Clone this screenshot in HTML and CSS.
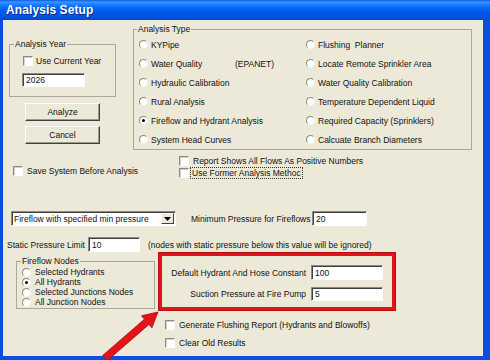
FILE: index.html
```html
<!DOCTYPE html>
<html>
<head>
<meta charset="utf-8">
<title>Analysis Setup</title>
<link rel="stylesheet" href="styles.css">
</head>
<body>
<div class="window">
  <div class="titlebar"><span class="title">Analysis Setup</span></div>
  <div class="client">
    <div class="top">
      <div class="leftcol">
        <fieldset class="group year">
          <legend>Analysis Year</legend>
          <div class="year-inner">
            <div class="check-row"><span class="cb"></span><span>Use Current Year</span></div>
            <div class="field year-field">2026</div>
          </div>
        </fieldset>
        <div class="btn analyze">Analyze</div>
        <div class="btn cancel">Cancel</div>
      </div>
      <fieldset class="group type">
        <legend>Analysis Type</legend>
        <div class="type-grid">
          <div class="opt"><span class="rb"></span>KYPipe</div>
          <div class="opt"><span class="rb"></span>Flushing&nbsp; Planner</div>
          <div class="opt"><span class="rb"></span><span class="wq">Water Quality</span>(EPANET)</div>
          <div class="opt"><span class="rb"></span>Locate Remote Sprinkler Area</div>
          <div class="opt"><span class="rb"></span>Hydraulic Calibration</div>
          <div class="opt"><span class="rb"></span>Water Quality Calibration</div>
          <div class="opt"><span class="rb"></span>Rural Analysis</div>
          <div class="opt"><span class="rb"></span>Temperature Dependent Liquid</div>
          <div class="opt"><span class="rb on"></span>Fireflow and Hydrant Analysis</div>
          <div class="opt"><span class="rb"></span>Required Capacity (Sprinklers)</div>
          <div class="opt"><span class="rb"></span>System Head Curves</div>
          <div class="opt"><span class="rb"></span>Calcuate Branch Diameters</div>
        </div>
      </fieldset>
    </div>

    <div class="rowb">
      <div class="save check-row"><span class="cb"></span><span>Save System Before Analysis</span></div>
      <div class="opts-b">
        <div class="check-row"><span class="cb"></span><span>Report Shows All Flows As Positive Numbers</span></div>
        <div class="check-row"><span class="cb"></span><span class="focus">Use Former Analysis Methoc</span></div>
      </div>
    </div>

    <div class="rowc">
      <div class="combo">
        <span class="combo-text">Fireflow with specified min pressure</span>
        <span class="combo-btn"><svg width="7" height="4" viewBox="0 0 7 4"><path d="M0 0H7L3.5 4Z" fill="#000"/></svg></span>
      </div>
      <span class="minlabel">Minimum Pressure for Fireflows</span>
      <div class="field minfield">20</div>
    </div>

    <div class="rowd">
      <span class="staticlabel">Static Pressure Limit</span>
      <div class="field staticfield">10</div>
      <span>(nodes with static pressure below this value will be ignored)</span>
    </div>

    <div class="rowe">
      <fieldset class="group nodes">
        <legend>Fireflow Nodes</legend>
        <div class="nodes-list">
          <div class="opt"><span class="rb sm"></span>Selected Hydrants</div>
          <div class="opt"><span class="rb sm on"></span>All Hydrants</div>
          <div class="opt"><span class="rb sm"></span>Selected Junctions Nodes</div>
          <div class="opt"><span class="rb sm"></span>All Junction Nodes</div>
        </div>
      </fieldset>
      <div class="redbox">
        <span class="rl">Default Hydrant And Hose Constant</span>
        <div class="field rf1">100</div>
        <span class="rl">Suction Pressure at Fire Pump</span>
        <div class="field rf2">5</div>
      </div>
    </div>

    <div class="rowf">
      <div class="check-row"><span class="cb"></span><span>Generate Flushing Report (Hydrants and Blowoffs)</span></div>
      <div class="check-row"><span class="cb"></span><span>Clear Old Results</span></div>
    </div>
  </div>

  <svg class="arrow" width="490" height="360" viewBox="0 0 490 360">
    <polygon points="102.7,355.4 144.4,319.2 141.5,315.8 158,312 151.9,327.8 149,324.4 107.3,360.6" fill="#e5121a" stroke="#a50a0f" stroke-width="0.8" stroke-linejoin="round"/>
  </svg>
</div>
</body>
</html>
```

FILE: styles.css
```css
* { box-sizing: border-box; }
html, body { margin: 0; padding: 0; }
body {
  width: 490px;
  height: 360px;
  overflow: hidden;
  font-family: "Liberation Sans", Arial, sans-serif;
  font-size: 8.5px;
  color: #111;
  background: #ECE9D8;
}
.window {
  position: relative;
  width: 490px;
  height: 360px;
  display: flex;
  flex-direction: column;
}
.titlebar {
  flex: none;
  height: 20px;
  display: flex;
  align-items: center;
  padding-left: 6px;
  background: linear-gradient(#0a5be8 0%, #3c95ff 10%, #1a80ff 22%, #0468f6 40%, #0058ea 60%, #0053e0 85%, #0049cf 100%);
  color: #fff;
}
.title {
  font-family: "Liberation Sans Narrow", "Liberation Sans", Arial, sans-serif;
  font-weight: bold;
  font-size: 12px;
  letter-spacing: 0.1px;
  text-shadow: 1px 1px 0 #0a2a8a;
}
.client {
  flex: 1;
  background: #ECE9D8;
  border-left: 3px solid #0b4fe0;
  border-right: 7px solid #0b4fe0;
  border-bottom: 4px solid #0b4fe0;
  padding-top: 4px;
  display: flex;
  flex-direction: column;
}

/* group boxes */
.group {
  margin: 0;
  padding: 0;
  min-width: 0;
  border: 1px solid #aca899;
}
.group legend {
  padding: 0 1px;
  height: 11px;
  line-height: 11px;
  margin-left: 3px;
}

/* common controls */
.check-row { display: flex; align-items: center; height: 12px; white-space: nowrap; }
.cb {
  flex: none;
  width: 10px;
  height: 10px;
  background: #fff;
  border: 1px solid;
  border-color: #8a8a80 #fdfdfb #fdfdfb #8a8a80;
  box-shadow: inset 1px 1px 0 #d4d0c8;
  margin-right: 4px;
}
.opt { display: flex; align-items: center; white-space: nowrap; }
.rb {
  flex: none;
  position: relative;
  width: 9px;
  height: 9px;
  border-radius: 50%;
  background: #fff;
  border: 1px solid;
  border-color: #8a8a80 #f4f3ee #f4f3ee #8a8a80;
  margin-right: 3px;
}
.rb.on::after {
  content: "";
  position: absolute;
  left: 2px;
  top: 2px;
  width: 3px;
  height: 3px;
  border-radius: 50%;
  background: #000;
}
.field {
  flex: none;
  background: #fff;
  border: 1px solid;
  border-color: #8a8a80 #fff #fff #8a8a80;
  box-shadow: inset 1px 1px 0 #404040;
  padding-left: 3px;
  display: flex;
  align-items: center;
  white-space: nowrap;
}
.btn {
  width: 75px;
  height: 18px;
  display: flex;
  align-items: center;
  justify-content: center;
  border: 1px solid;
  border-color: #fff #404040 #404040 #fff;
  box-shadow: inset -1px -1px 0 #9c9a8e;
  background: #ECE9D8;
}

/* top */
.top { display: flex; align-items: flex-start; height: 126px; flex: none; }
.leftcol { width: 107px; margin-left: 6px; margin-top: 15px; display: flex; flex-direction: column; }
.year { width: 107px; }
.year legend { margin-left: 4px; }
.year-inner { padding: 5px 0 9px 13px; }
.year-inner .check-row .cb { margin-right: 3px; }
.year-field { width: 63px; height: 14px; margin-top: 6px; margin-left: -1px; }
.analyze { margin: 6px 0 0 16px; }
.cancel { margin: 5px 0 0 16px; }

.type { width: 339px; margin-left: 17px; }
.type-grid {
  display: grid;
  grid-template-columns: 167px 1fr;
  grid-auto-rows: 19px;
  padding-left: 5px;
}
.wq { display: inline-block; width: 84px; }

/* row b */
.rowb { display: flex; align-items: flex-start; margin-top: 5px; flex: none; }
.save { width: 176px; padding-left: 10px; margin-top: 10px; }
.opts-b { display: flex; flex-direction: column; }
.focus { outline: 1px dotted #333; outline-offset: 0; padding: 0 1px; margin-left: -2px; line-height: 10px; }

/* row c */
.rowc { display: flex; align-items: center; margin-top: 32px; height: 15px; flex: none; }
.combo {
  width: 165px;
  height: 15px;
  margin-left: 8px;
  background: #fff;
  border: 1px solid;
  border-color: #8a8a80 #fff #fff #8a8a80;
  box-shadow: inset 1px 1px 0 #404040;
  display: flex;
  align-items: center;
  justify-content: space-between;
  padding-left: 2px;
}
.combo-btn {
  width: 13px;
  height: 11px;
  margin-right: 1px;
  background: #ECE9D8;
  border: 1px solid;
  border-color: #fff #404040 #404040 #fff;
  display: flex;
  align-items: center;
  justify-content: center;
}
.minlabel { width: 121px; margin-left: 15px; white-space: nowrap; }
.minfield { width: 55px; height: 15px; }

/* row d */
.rowd { display: flex; align-items: center; margin-top: 11px; height: 15px; flex: none; white-space: nowrap; }
.staticlabel { width: 81px; margin-left: 4px; }
.staticfield { width: 52px; height: 15px; margin-right: 8px; }

/* row e */
.rowe { display: flex; align-items: flex-start; margin-top: 1px; flex: none; }
.nodes { width: 139px; margin-left: 13px; margin-top: 3px; }
.nodes legend { margin-left: 4px; }
.nodes-list { padding: 0 0 1px 5px; }
.nodes-list .opt { height: 10px; }
.rb.sm { width: 9px; height: 9px; margin-right: 4px; }
.redbox {
  width: 236px;
  height: 57px;
  margin-left: 4px;
  border: 3px solid #e3131b;
  box-shadow: 0 0 0 1px #b80d12;
  display: grid;
  grid-template-columns: 1fr 72px;
  grid-template-rows: 15px 14px;
  column-gap: 5px;
  row-gap: 7px;
  align-items: center;
  padding: 9px 9px 0 0;
}
.rl { text-align: right; white-space: nowrap; }
.rf1 { height: 15px; }
.rf2 { height: 14px; }

/* row f */
.rowf { display: flex; flex-direction: column; gap: 6px; margin-top: 9px; margin-left: 162px; flex: none; }

.arrow { position: absolute; left: 0; top: 0; pointer-events: none; }
```
